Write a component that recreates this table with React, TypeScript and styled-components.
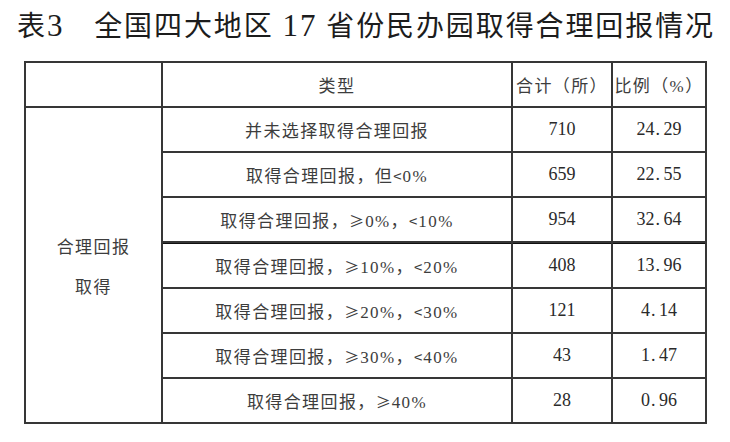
import React from "react";
import styled, { createGlobalStyle } from "styled-components";

const Global = createGlobalStyle`
  html, body { margin: 0; padding: 0; background: #fff; }
  body { font-family: "Liberation Serif", "Noto Sans CJK SC", serif; }
`;

const Page = styled.div`
  width: 730px;
  height: 442px;
  background: #fff;
  overflow: hidden;
`;

const Title = styled.h1`
  margin: 12px 0 0 17px;
  font-family: "Liberation Serif", "Noto Sans CJK SC", serif;
  font-weight: 400;
  font-size: 28px;
  line-height: 28px;
  letter-spacing: 1.9px;
  color: #1c1c1c;
  white-space: nowrap;
`;

const Digits = styled.span`
  font-size: 31px;
`;

const Grid = styled.div`
  margin: 20px 0 0 24px;
  width: 683px;
  box-sizing: border-box;
  display: grid;
  grid-template-columns: 135px 348px 98px 92px;
  grid-template-rows: repeat(4, 43px) 44px repeat(3, 43px);
  gap: 2px;
  padding: 2px;
  background: #363636;
`;

const Cell = styled.div<{ $thick?: boolean; $span?: number }>`
  background: #fff;
  display: flex;
  align-items: center;
  justify-content: center;
  font-family: "Liberation Serif", "Noto Sans CJK SC", serif;
  font-size: 17px;
  letter-spacing: 1.4px;
  color: #3d3d3d;
  white-space: nowrap;
  ${(p) => (p.$thick ? "border-top: 1px solid #111;" : "")}
  ${(p) => (p.$span ? `grid-row: span ${p.$span};` : "")}
`;

const NumCell = styled(Cell)`
  font-size: 18px;
  letter-spacing: 0;
  color: #2a2a2a;
`;

const Sym = styled.span`
  font-family: "Noto Sans CJK SC", sans-serif;
  font-size: 15px;
  letter-spacing: 1px;
`;

const GroupLabel = styled.div`
  display: flex;
  flex-direction: column;
  align-items: center;
  line-height: 40px;
  margin-top: 6px;
`;

const Dot = styled.span`
  display: inline-block;
  width: 9px;
  text-align: left;
  padding-left: 1px;
  box-sizing: border-box;
`;

const Decimal: React.FC<{ value: string }> = ({ value }) => {
  const [a, b] = value.split(".");
  return (
    <span>
      {a}
      <Dot>.</Dot>
      {b}
    </span>
  );
};

const Label: React.FC<{ text: string }> = ({ text }) => {
  const parts = text.split(/([≥<])/);
  return (
    <span>
      {parts.map((p, i) =>
        p === "≥" || p === "<" ? <Sym key={i}>{p}</Sym> : <React.Fragment key={i}>{p}</React.Fragment>
      )}
    </span>
  );
};

const rows = [
  { label: "并未选择取得合理回报", count: "710", pct: "24.29" },
  { label: "取得合理回报，但<0%", count: "659", pct: "22.55" },
  { label: "取得合理回报，≥0%，<10%", count: "954", pct: "32.64" },
  { label: "取得合理回报，≥10%，<20%", count: "408", pct: "13.96" },
  { label: "取得合理回报，≥20%，<30%", count: "121", pct: "4.14" },
  { label: "取得合理回报，≥30%，<40%", count: "43", pct: "1.47" },
  { label: "取得合理回报，≥40%", count: "28", pct: "0.96" },
];

export default function App() {
  return (
    <Page>
      <Global />
      <Title>
        表<Digits>3</Digits>　全国四大地区 <Digits>17</Digits> 省份民办园取得合理回报情况
      </Title>
      <Grid>
        <Cell />
        <Cell>类型</Cell>
        <Cell>合计（所）</Cell>
        <Cell>比例（%）</Cell>
        {rows.map((r, i) => (
          <React.Fragment key={r.label}>
            {i === 0 && (
              <Cell $span={7}>
                <GroupLabel>
                  <span>合理回报</span>
                  <span>取得</span>
                </GroupLabel>
              </Cell>
            )}
            <Cell $thick={i === 3}>
              <Label text={r.label} />
            </Cell>
            <NumCell $thick={i === 3}>{r.count}</NumCell>
            <NumCell $thick={i === 3}>
              <Decimal value={r.pct} />
            </NumCell>
          </React.Fragment>
        ))}
      </Grid>
    </Page>
  );
}
